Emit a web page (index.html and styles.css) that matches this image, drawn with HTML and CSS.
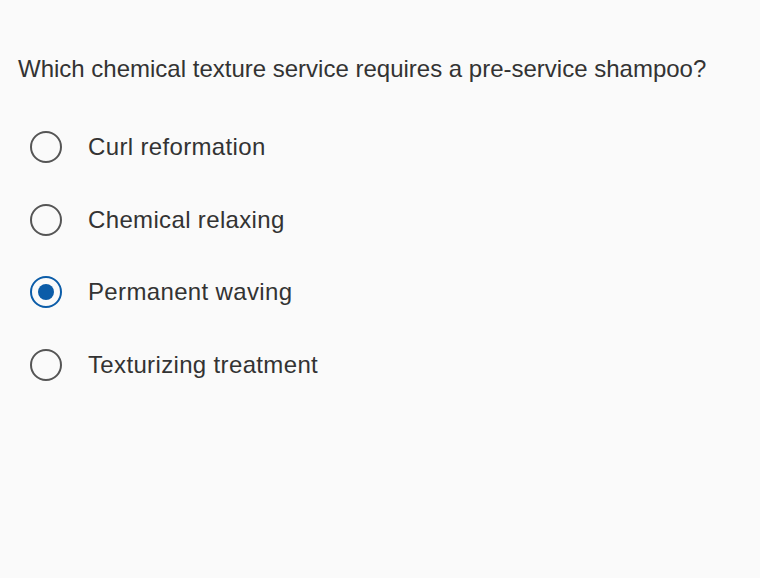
FILE: index.html
```html
<!DOCTYPE html>
<html>
<head>
<meta charset="utf-8">
<link rel="stylesheet" href="styles.css">
</head>
<body>
<div class="quiz">
  <p class="question">Which chemical texture service requires a pre-service shampoo?</p>
  <ul class="options">
    <li class="option"><span class="radio"></span><span class="label">Curl reformation</span></li>
    <li class="option"><span class="radio"></span><span class="label">Chemical relaxing</span></li>
    <li class="option"><span class="radio checked"></span><span class="label">Permanent waving</span></li>
    <li class="option"><span class="radio"></span><span class="label">Texturizing treatment</span></li>
  </ul>
</div>
</body>
</html>
```
FILE: styles.css
```css
html, body {
  margin: 0;
  padding: 0;
  background: #fafafa;
}
body {
  width: 760px;
  height: 578px;
  overflow: hidden;
  font-family: "Liberation Sans", Arial, sans-serif;
  color: #333333;
}
.quiz {
  padding: 54px 0 0 18px;
}
.question {
  margin: 0;
  font-size: 24px;
  line-height: 30px;
}
.options {
  list-style: none;
  margin: 0;
  padding: 47px 0 0 12px;
  display: flex;
  flex-direction: column;
  gap: 40.5px;
}
.option {
  display: flex;
  align-items: center;
  height: 32px;
}
.radio {
  box-sizing: border-box;
  width: 32px;
  height: 32px;
  border: 2px solid #555555;
  border-radius: 50%;
  flex: none;
  display: flex;
  align-items: center;
  justify-content: center;
}
.radio.checked {
  border-color: #0b5ca8;
}
.radio.checked::after {
  content: "";
  width: 16px;
  height: 16px;
  border-radius: 50%;
  background: #0b5ca8;
}
.label {
  margin-left: 26px;
  font-size: 24px;
  letter-spacing: 0.35px;
}
```
